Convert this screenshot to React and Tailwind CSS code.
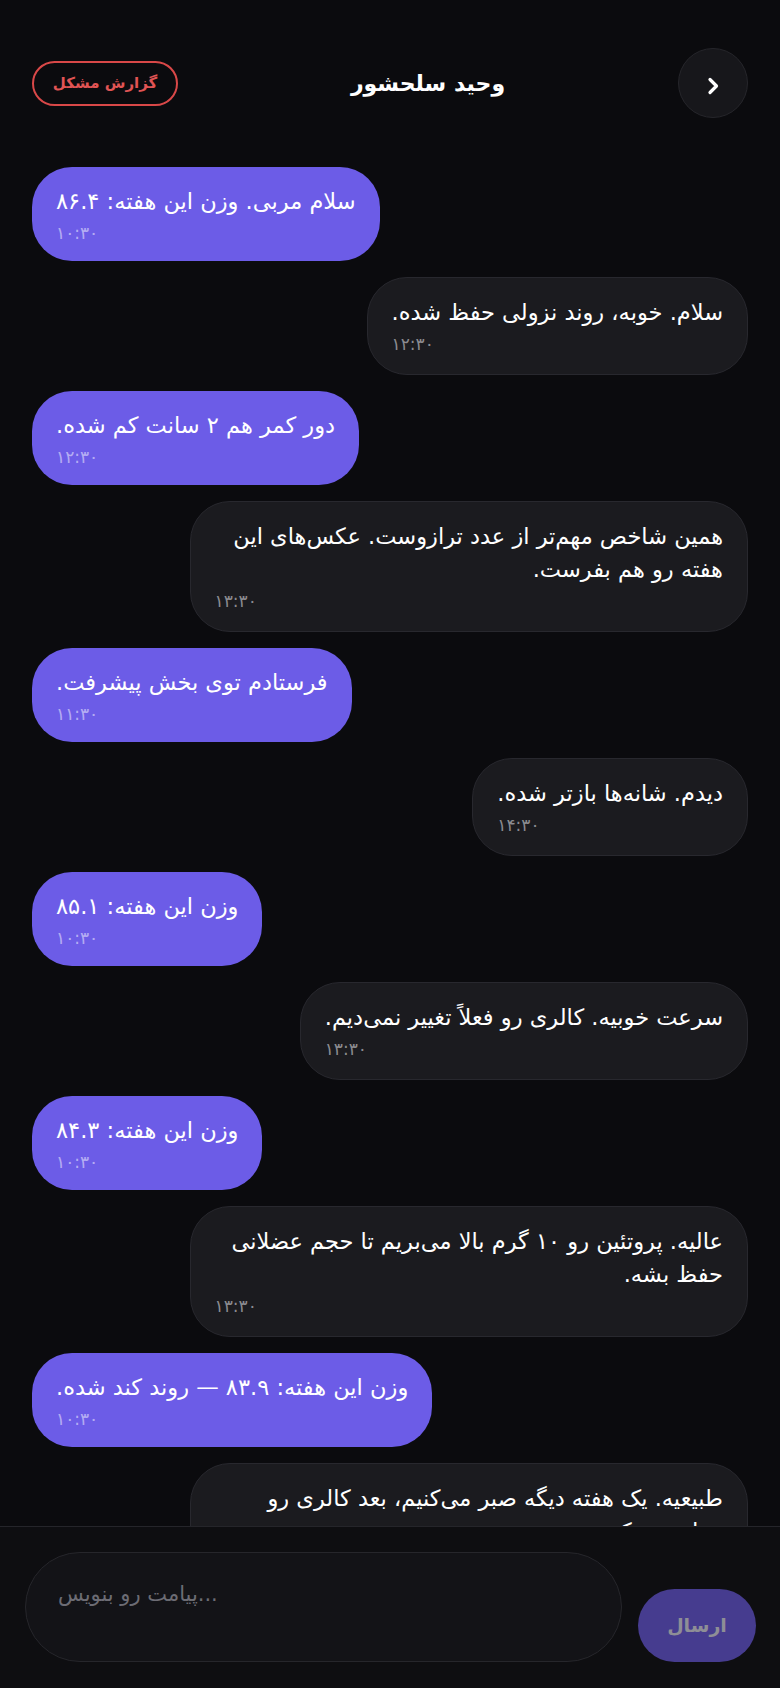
import { useState } from "react";

const messages = [
  { me: true, text: "سلام مربی. وزن این هفته: ۸۶.۴", time: "۱۰:۳۰" },
  { me: false, text: "سلام. خوبه، روند نزولی حفظ شده.", time: "۱۲:۳۰" },
  { me: true, text: "دور کمر هم ۲ سانت کم شده.", time: "۱۲:۳۰" },
  { me: false, text: "همین شاخص مهم‌تر از عدد ترازوست. عکس‌های این هفته رو هم بفرست.", time: "۱۳:۳۰" },
  { me: true, text: "فرستادم توی بخش پیشرفت.", time: "۱۱:۳۰" },
  { me: false, text: "دیدم. شانه‌ها بازتر شده.", time: "۱۴:۳۰" },
  { me: true, text: "وزن این هفته: ۸۵.۱", time: "۱۰:۳۰" },
  { me: false, text: "سرعت خوبیه. کالری رو فعلاً تغییر نمی‌دیم.", time: "۱۳:۳۰" },
  { me: true, text: "وزن این هفته: ۸۴.۳", time: "۱۰:۳۰" },
  { me: false, text: "عالیه. پروتئین رو ۱۰ گرم بالا می‌بریم تا حجم عضلانی حفظ بشه.", time: "۱۳:۳۰" },
  { me: true, text: "وزن این هفته: ۸۳.۹ — روند کند شده.", time: "۱۰:۳۰" },
  { me: false, text: "طبیعیه. یک هفته دیگه صبر می‌کنیم، بعد کالری رو تنظیم می‌کنیم.", time: "۱۳:۳۰" },
];

function Bubble({ msg }) {
  if (msg.me) {
    return (
      <div className="max-w-[78%] self-end rounded-[40px] bg-[#6c5ce7] px-6 pt-[18px] pb-[18px] text-white">
        <p className="text-[22.5px] leading-[33px]">{msg.text}</p>
        <p className="mt-[5px] text-left text-[17px] leading-[20px] tracking-[1.5px] text-white/50">{msg.time}</p>
      </div>
    );
  }
  return (
    <div className="max-w-[78%] self-start rounded-[40px] border border-[#28282e] bg-[#1b1b1f] px-6 pt-[18px] pb-[20px] text-white">
      <p className="text-[22.5px] leading-[33px]">{msg.text}</p>
      <p className="mt-[5px] text-left text-[17px] leading-[20px] tracking-[1.5px] text-[#8b8b90]">{msg.time}</p>
    </div>
  );
}

export default function App() {
  const [draft, setDraft] = useState("");

  return (
    <div
      dir="rtl"
      className="flex h-[1688px] w-full flex-col overflow-hidden bg-[#0b0b0e] font-['DejaVu_Sans',sans-serif] text-white"
    >
      <header className="flex items-center justify-between px-8 pt-12">
        <button
          type="button"
          className="flex h-[70px] w-[70px] items-center justify-center rounded-full border border-[#26262b] bg-[#17171b]"
        >
          <svg width="14" height="20" viewBox="0 0 14 20" fill="none" className="mt-[6px]">
            <path d="M4 3.5l6.5 6.5-6.5 6.5" stroke="white" strokeWidth="3.2" strokeLinecap="round" strokeLinejoin="round" />
          </svg>
        </button>
        <h1 className="text-[22px] font-bold">وحید سلحشور</h1>
        <button
          type="button"
          className="flex h-[45px] w-[146px] items-center justify-center rounded-full border-2 border-[#d94848] text-[15px] font-bold text-[#e05454]"
        >
          گزارش مشکل
        </button>
      </header>

      <main className="flex flex-1 flex-col gap-4 overflow-hidden px-8 pt-[49px]">
        {messages.map((msg, i) => (
          <Bubble key={i} msg={msg} />
        ))}
      </main>

      <footer className="flex items-end gap-4 border-t border-[#25252a] bg-[#0e0e11] pt-[25px] pr-6 pb-[26px] pl-[25px]">
        <button
          type="button"
          className="flex h-[73px] w-[118px] shrink-0 items-center justify-center rounded-full bg-[#463c8f] text-[19px] font-bold text-[#8e8e96]"
        >
          ارسال
        </button>
        <textarea
          dir="ltr"
          value={draft}
          onChange={(e) => setDraft(e.target.value)}
          placeholder="پیامت رو بنویس..."
          className="h-[110px] flex-1 resize-none rounded-[55px] border border-[#26262b] bg-[#131317] px-8 pt-[27px] text-left text-[21px] leading-[28px] text-white outline-none placeholder:text-[#6c6c74]"
        />
      </footer>
    </div>
  );
}
